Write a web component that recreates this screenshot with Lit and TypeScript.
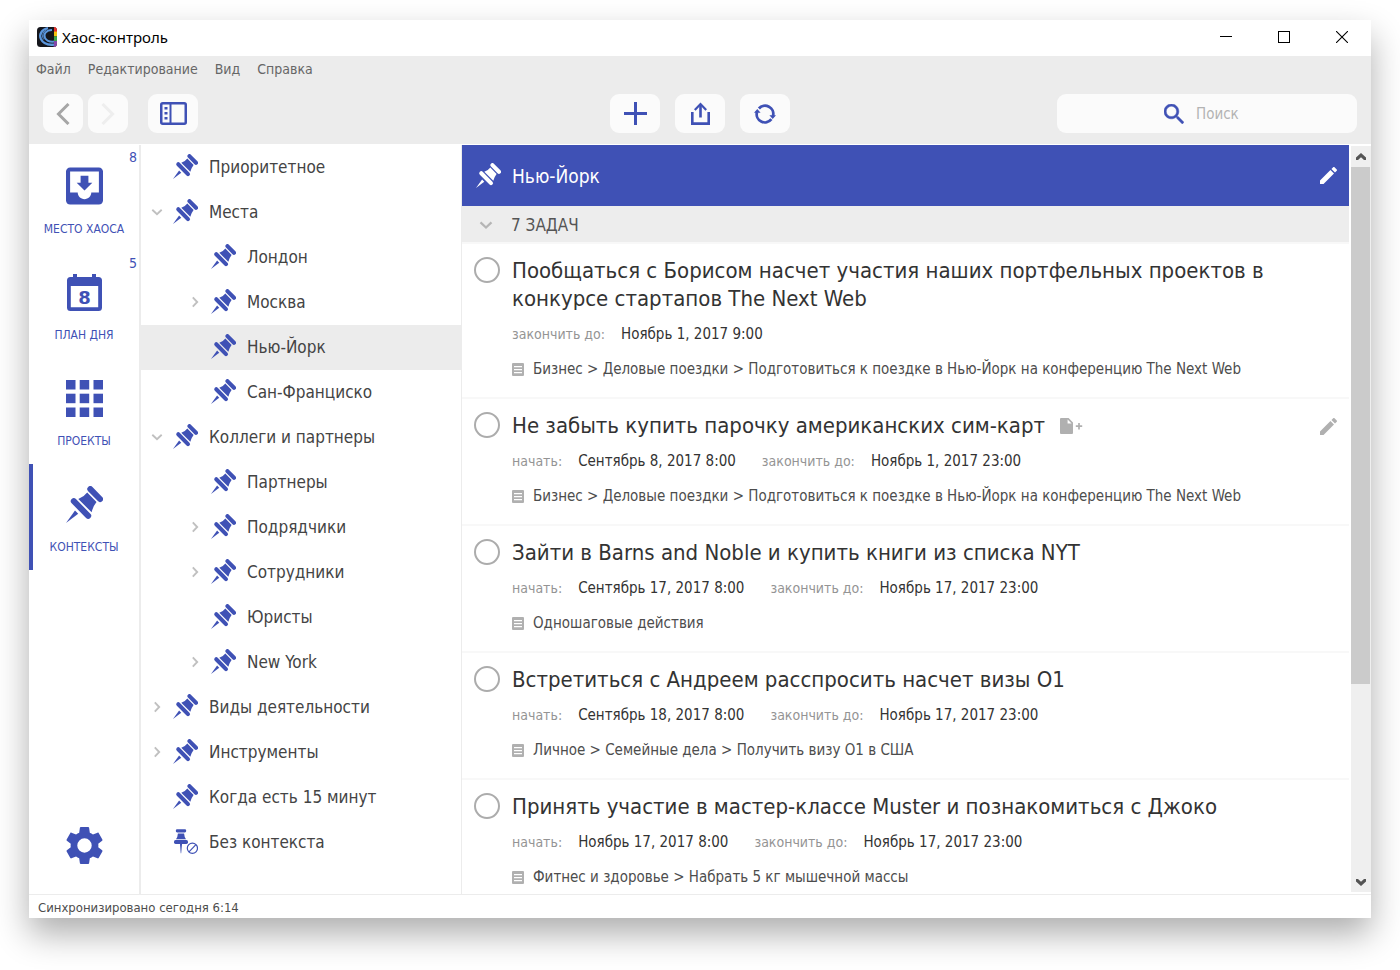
import { LitElement, html, css, svg, nothing, type TemplateResult } from "lit";
import { customElement, property, state } from "lit/decorators.js";
import { classMap } from "lit/directives/class-map.js";

interface ContextNode {
  name: string;
  level: 0 | 1;
  toggle?: "open" | "closed";
  none?: boolean;
}

interface Task {
  title: string;
  start?: string;
  due: string;
  path: string;
  hovered?: boolean;
}

const CONTEXTS: ContextNode[] = [
  { name: "Приоритетное", level: 0 },
  { name: "Места", level: 0, toggle: "open" },
  { name: "Лондон", level: 1 },
  { name: "Москва", level: 1, toggle: "closed" },
  { name: "Нью-Йорк", level: 1 },
  { name: "Сан-Франциско", level: 1 },
  { name: "Коллеги и партнеры", level: 0, toggle: "open" },
  { name: "Партнеры", level: 1 },
  { name: "Подрядчики", level: 1, toggle: "closed" },
  { name: "Сотрудники", level: 1, toggle: "closed" },
  { name: "Юристы", level: 1 },
  { name: "New York", level: 1, toggle: "closed" },
  { name: "Виды деятельности", level: 0, toggle: "closed" },
  { name: "Инструменты", level: 0, toggle: "closed" },
  { name: "Когда есть 15 минут", level: 0 },
  { name: "Без контекста", level: 0, none: true },
];

const CONFERENCE =
  "Бизнес > Деловые поездки > Подготовиться к поездке в Нью-Йорк на конференцию The Next Web";

const TASKS: Task[] = [
  {
    title: "Пообщаться с Борисом насчет участия наших портфельных проектов в конкурсе стартапов The Next Web",
    due: "Ноябрь 1, 2017 9:00",
    path: CONFERENCE,
  },
  {
    title: "Не забыть купить парочку американских сим-карт",
    start: "Сентябрь 8, 2017 8:00",
    due: "Ноябрь 1, 2017 23:00",
    path: CONFERENCE,
    hovered: true,
  },
  {
    title: "Зайти в Barns and Noble и купить книги из списка NYT",
    start: "Сентябрь 17, 2017 8:00",
    due: "Ноябрь 17, 2017 23:00",
    path: "Одношаговые действия",
  },
  {
    title: "Встретиться с Андреем расспросить насчет визы O1",
    start: "Сентябрь 18, 2017 8:00",
    due: "Ноябрь 17, 2017 23:00",
    path: "Личное > Семейные дела > Получить визу O1 в США",
  },
  {
    title: "Принять участие в мастер-классе Muster и познакомиться с Джоко",
    start: "Ноябрь 17, 2017 8:00",
    due: "Ноябрь 17, 2017 23:00",
    path: "Фитнес и здоровье > Набрать 5 кг мышечной массы",
  },
];

const icon = (w: number, h: number, box: string, body: TemplateResult) =>
  html`<svg class="icon" width=${w} height=${h} viewBox=${box} fill="currentColor" aria-hidden="true">${body}</svg>`;

const pin = (size: number) =>
  icon(size, size, "0 0 37 37", svg`
    <path d="M24.3 3.100 L34 13" stroke="currentColor" stroke-width="6" stroke-linecap="round"/>
    <path d="M7.800 15.200 L22.200 29.800" stroke="currentColor" stroke-width="6" stroke-linecap="round"/>
    <path d="M12.300 13 Q18 11 21.200 6.600 L30.500 16.100 Q27 20.500 25.600 26.300 Z"/>
    <path d="M0 37 L9 24.600 L12.200 27.800 Z"/>`);

const pinNone = icon(25, 25, "0 0 25 25", svg`
  <rect x="2.8" y="0.3" width="10.4" height="3.2" rx="1.4"/>
  <path d="M4.9 4.4 H11.1 Q11.3 7.8 13 10.2 H3 Q4.7 7.8 4.9 4.4Z"/>
  <rect x="1" y="11.1" width="14" height="3.8" rx="1.6"/>
  <path d="M7 15 H9 L8.2 24.2 H7.7Z"/>
  <circle cx="19.4" cy="19.2" r="5.1" fill="none" stroke="currentColor" stroke-width="1.2"/>
  <path d="M16 22.8 L22.9 15.7" stroke="currentColor" stroke-width="1.2"/>`);

const chevron = (open: boolean, size = 12) =>
  icon(size, size, "0 0 12 12", open
    ? svg`<path d="M1.300 3.8 L6 8.2 L10.700 3.8" fill="none" stroke="currentColor" stroke-width="1.900"/>`
    : svg`<path d="M3.8 1.300 L8.2 6 L3.8 10.700" fill="none" stroke="currentColor" stroke-width="1.900"/>`);

const pencil = icon(17, 17, "3 3 18 18", svg`
  <path d="M3 17.25V21h3.75L17.81 9.94l-3.75-3.75L3 17.25zM20.71 7.04c.39-.39.39-1.02 0-1.41l-2.34-2.34c-.39-.39-1.02-.39-1.41 0l-1.83 1.83 3.75 3.75 1.83-1.83z"/>`);

const inbox = icon(37, 38, "3 3 18 18", svg`
  <path d="M19 3H5c-1.100 0-2 .9-2 2v14c0 1.100.9 2 2 2h14c1.100 0 2-.9 2-2V5c0-1.100-.9-2-2-2zm0 12.200h-3.700c0 1.800-1.500 3.200-3.300 3.200s-3.300-1.400-3.300-3.200H5V5h14v10.200zm-3.200-4.800h-1.900V7h-3.800v3.400H8.200L12 14.200l3.800-3.800z"/>`);

const calendar = icon(35, 37, "0 0 35 37", svg`
  <path fill-rule="evenodd" d="M6 0h4v3h15V0h4v3h2.500a3.500 3.500 0 0 1 3.500 3.500v27a3.500 3.500 0 0 1-3.500 3.500h-28A3.500 3.500 0 0 1 0 33.500v-27A3.500 3.500 0 0 1 3.500 3H6zM3.800 12v21.300h27.400V12z"/>
  <text class="day" x="17.500" y="29.500" text-anchor="middle">8</text>`);

const grid = icon(37, 37, "0 0 37 37", svg`
  ${[0, 13.7, 27.5].map((y) => [0, 13.7, 27.5].map((x) => svg`<rect x=${x} y=${y} width="9.500" height="9.500"/>`))}`);

const gear = icon(37, 39, "2 1.500 20 21", svg`
  <path d="M19.430 12.980c.04-.32.07-.64.07-.98s-.03-.66-.07-.98l2.110-1.650c.19-.15.24-.42.12-.64l-2-3.460c-.12-.22-.39-.3-.61-.22l-2.490 1c-.52-.4-1.080-.73-1.690-.98l-.38-2.650C14.460 2.180 14.250 2 14 2h-4c-.25 0-.46.18-.49.42l-.38 2.650c-.61.25-1.170.59-1.690.98l-2.490-1c-.23-.09-.49 0-.61.22l-2 3.460c-.13.22-.07.49.12.64l2.110 1.650c-.04.32-.07.65-.07.98s.03.66.07.98l-2.110 1.650c-.19.15-.24.42-.12.64l2 3.460c.12.22.39.3.61.22l2.490-1c.52.4 1.080.73 1.690.98l.38 2.650c.03.24.24.42.49.42h4c.25 0 .46-.18.49-.42l.38-2.650c.61-.25 1.170-.59 1.690-.98l2.490 1c.23.09.49 0 .61-.22l2-3.460c.12-.22.07-.49-.12-.64l-2.110-1.650zM12 15.900a3.900 3.900 0 1 1 0-7.800 3.900 3.900 0 0 1 0 7.800z"/>`);

const appLogo = icon(20, 20, "0 0 20 20", svg`
  <rect width="20" height="20" rx="3.500" fill="#15161c"/>
  <path d="M17 0.100 Q20 0.500 20 3.500 V5 H17Z" fill="#e5322d"/>
  <rect x="17" y="4.600" width="3" height="4.800" fill="#f4c20d"/>
  <rect x="17" y="9.400" width="3" height="4.600" fill="#3aa648"/>
  <path d="M17 14 H20 V16.500 Q20 19.600 16.600 20Z" fill="#8546a8"/>
  <g fill="none" stroke="#5b96dc">
    <path d="M11 1.200 C4.500 2.500 1.800 7.500 3.900 12 C6 16.200 11 18.300 17 17.600" stroke-width="2.300"/>
    <path d="M15 3 C9 3 6 7.500 8 11 C9.800 14 13 15 17 14.600" stroke-width="2"/>
    <path d="M9 2.800 C5.500 5.500 4.600 9.500 6.800 12.500" stroke-width="1"/>
  </g>`);

const doc = icon(12, 13, "0 0 12 13", svg`
  <path fill-rule="evenodd" d="M1 0h10a1 1 0 0 1 1 1v11a1 1 0 0 1-1 1H1a1 1 0 0 1-1-1V1a1 1 0 0 1 1-1zM2 3v1.200h8V3zM2 6v1.200h8V6zM2 9v1.200h8V9z"/>`);

const noteAdd = icon(23, 16, "0 0 23 16", svg`
  <path fill-rule="evenodd" d="M1 0h7.600L13 4.500V15a1 1 0 0 1-1 1H1a1 1 0 0 1-1-1V1a1 1 0 0 1 1-1zM7.600 1.400v4h4z"/>
  <path d="M19 5v6.400M15.800 8.200h6.400" stroke="currentColor" stroke-width="1.700"/>`);

const glyphs = {
  back: icon(14, 22, "0 0 14 22", svg`<path d="M12.500 1 L2.500 11 L12.500 21" fill="none" stroke="currentColor" stroke-width="3"/>`),
  forward: icon(14, 22, "0 0 14 22", svg`<path d="M1.500 1 L11.500 11 L1.500 21" fill="none" stroke="currentColor" stroke-width="3"/>`),
  panel: icon(27, 23, "0 0 27 23", svg`
    <rect x="1.250" y="1.250" width="24.500" height="20.500" rx="1.500" fill="none" stroke="currentColor" stroke-width="2.500"/>
    <path d="M10.500 1v21" stroke="currentColor" stroke-width="2"/>
    <path d="M4.500 5h3v2.500h-3zM4.500 10h3v2.500h-3zM4.500 15h3v2.500h-3z"/>`),
  plus: icon(23, 23, "0 0 23 23", svg`<path d="M10 0h3v10h10v3H13v10h-3V13H0v-3h10z"/>`),
  share: icon(19, 23, "0 0 19 23", svg`
    <path d="M0 10h2.600v10.200h13.800V10H19v13H0z"/>
    <path d="M9.500 2.500V15.500" stroke="currentColor" stroke-width="2.600"/>
    <path d="M3.800 8 L9.500 2 L15.200 8" fill="none" stroke="currentColor" stroke-width="2.200"/>`),
  sync: icon(22, 22, "0 0 22 22", svg`
    <path d="M3 9 A8.200 8.200 0 0 0 17.400 16.200" fill="none" stroke="currentColor" stroke-width="2.800"/>
    <path d="M4.900 5.500 A8.200 8.200 0 0 1 19 13" fill="none" stroke="currentColor" stroke-width="2.800"/>
    <path d="M0 9.800 L3.300 6 L6.600 9.800ZM15.400 12.200 H22 L18.700 16Z"/>`),
  search: icon(20, 20, "3 3 17.500 17.500", svg`
    <path stroke="currentColor" stroke-width=".4" d="M15.500 14h-.79l-.28-.27C15.410 12.590 16 11.110 16 9.500 16 5.910 13.090 3 9.500 3S3 5.910 3 9.500 5.910 16 9.500 16c1.610 0 3.090-.59 4.230-1.570l.27.28v.79l5 4.990L20.490 19l-4.990-5zm-6 0C7.010 14 5 11.990 5 9.500S7.010 5 9.500 5 14 7.010 14 9.500 11.990 14 9.500 14z"/>`),
  minimize: icon(12, 12, "0 0 12 12", svg`<path d="M0 5h12v1H0z"/>`),
  maximize: icon(12, 12, "0 0 12 12", svg`<rect x=".5" y=".5" width="11" height="11" fill="none" stroke="currentColor"/>`),
  close: icon(12, 12, "0 0 12 12", svg`<path d="M0 0 L12 12 M12 0 L0 12" stroke="currentColor" stroke-width="1.100"/>`),
  up: icon(10, 8, "0 0 10 8", svg`<path d="M0 7V4.500L5 0l5 4.500V7H8L5 4.200 2 7z"/>`),
  down: icon(10, 8, "0 0 10 8", svg`<path d="M0 1v2.500L5 8l5-4.500V1H8L5 3.800 2 1z"/>`),
};

const RAIL = [
  { label: "МЕСТО ХАОСА", icon: inbox, count: 8 },
  { label: "ПЛАН ДНЯ", icon: calendar, count: 5 },
  { label: "ПРОЕКТЫ", icon: grid },
  { label: "КОНТЕКСТЫ", icon: pin(37), active: true },
];

const base = css`
  * { box-sizing: border-box; }
  button, input {
    margin: 0;
    padding: 0;
    border: 0;
    background: none;
    color: inherit;
    font: inherit;
  }
  button { display: flex; align-items: center; justify-content: center; }
  a { color: inherit; text-decoration: none; }
  ul { margin: 0; padding: 0; list-style: none; }
  .icon { display: block; flex: none; }
`;

@customElement("task-row")
class TaskRow extends LitElement {
  static styles = [base, css`
    :host { display: block; }
    .task {
      display: grid;
      grid-template-columns: 50px 1fr auto;
      padding: 13px 12px 18px 0;
      border-bottom: 2px solid #f8f8f8;
    }
    .done {
      appearance: none;
      width: 26px;
      height: 26px;
      margin: 0 0 0 12px;
      border: 2px solid #acacac;
      border-radius: 50%;
    }
    .done:checked { background: #acacac; }
    .head { display: flex; align-items: center; gap: 15px; }
    .title { font-size: 22px; line-height: 28px; color: #333; }
    .note, .edit { color: #b0b0b0; }
    .edit { height: 28px; }
    .dates { display: flex; margin-top: 11px; line-height: 20px; }
    .term { margin-right: 16px; font-size: 14px; color: #949494; }
    .date { margin-right: 26px; font-size: 15px; color: #333; }
    .path {
      display: flex;
      align-items: center;
      gap: 9px;
      margin-top: 15px;
      font-size: 15px;
      line-height: 20px;
      color: #4d4d4d;
    }
    .doc { color: #b0b0b0; }
  `];

  @property({ attribute: false }) task!: Task;

  render() {
    const t = this.task;
    return html`<article class="task">
      <input class="done" id="done" type="checkbox" />
      <div>
        <div class="head">
          <label class="title" for="done">${t.title}</label>
          ${t.hovered ? html`<button class="note" aria-label="Добавить заметку">${noteAdd}</button>` : nothing}
        </div>
        <div class="dates">
          ${t.start ? html`<span class="term">начать:</span><time class="date">${t.start}</time>` : nothing}
          <span class="term">закончить до:</span><time class="date">${t.due}</time>
        </div>
        <a class="path" href="#"><span class="doc">${doc}</span>${t.path}</a>
      </div>
      ${t.hovered ? html`<button class="edit" aria-label="Изменить">${pencil}</button>` : nothing}
    </article>`;
  }
}

@customElement("app-root")
class AppRoot extends LitElement {
  static styles = [base, css`
    :host {
      display: block;
      height: 100vh;
      padding: 20px 29px 52px;
      background: #fff;
      font-family: "DejaVu Sans Condensed", "DejaVu Sans", "Noto Sans", sans-serif;
      box-sizing: border-box;
      overflow: hidden;
    }
    .window {
      display: flex;
      flex-direction: column;
      height: 100%;
      background: #fff;
      box-shadow: 0 16px 32px rgba(0, 0, 0, 0.32);
    }
    .titlebar {
      display: flex;
      align-items: center;
      height: 36px;
      padding: 0 0 2px 8px;
      color: #000;
    }
    .app-name {
      flex: 1;
      margin-left: 5px;
      font-family: "Noto Sans", sans-serif;
      font-size: 15px;
      line-height: 20px;
    }
    .win { width: 58px; height: 34px; }
    .chrome { background: #ececec; }
    .menu { display: flex; gap: 17px; padding: 3px 7px 5px; font-size: 14px; line-height: 20px; color: #666; }
    .toolbar {
      display: grid;
      grid-template-columns: 1fr auto 1fr;
      align-items: center;
      padding: 10px 14px 11px;
    }
    .group { display: flex; gap: 15px; }
    .nav { display: flex; gap: 5px; margin-right: 5px; }
    .tool {
      width: 50px;
      height: 39px;
      border-radius: 9px;
      background: #fbfbfb;
      color: #3f51b5;
    }
    .nav .tool { width: 40px; }
    .tool.back { color: #a6a6a6; }
    .tool.forward { color: #eee; }
    .search {
      display: flex;
      align-items: center;
      justify-self: end;
      gap: 12px;
      width: 300px;
      height: 39px;
      padding: 0 12px 0 107px;
      border-radius: 9px;
      background: #fbfbfb;
      color: #3f51b5;
    }
    .query { flex: 1; min-width: 0; font-size: 15px; outline: 0; color: #333; }
    .query::placeholder { color: #b3b3b3; opacity: 1; }
    .body { display: flex; flex: 1; min-height: 0; margin-top: 1px; }
    .rail {
      display: flex;
      flex-direction: column;
      flex: none;
      width: 112px;
      padding-top: 1px;
      border-right: 2px solid #ececec;
      color: #3f51b5;
    }
    .section {
      position: relative;
      display: flex;
      flex-direction: column;
      align-items: center;
      height: 106px;
      padding-top: 20px;
      font-size: 12px;
      line-height: 18px;
    }
    .section.active { box-shadow: inset 4px 0 #3f51b5; }
    .picture { display: flex; align-items: center; height: 40px; }
    .caption { margin-top: 14px; }
    .count { position: absolute; top: 2px; right: 2px; font-size: 14px; }
    .day { font: bold 18px "DejaVu Sans", sans-serif; }
    .settings { margin: auto auto 29px; color: #3f51b5; }
    .tree { flex: none; width: 320px; overflow: hidden; }
    .node {
      display: flex;
      align-items: center;
      height: 45px;
      padding: 0 0 2px 10px;
      font-size: 17px;
      color: #444;
    }
    .node.child { padding-left: 48px; }
    .node.selected { background: #ececec; }
    .toggle { width: 12px; height: 43px; margin-right: 10px; color: #c0c0c0; }
    .pin { margin-right: 11px; color: #3f51b5; }
    .list {
      flex: 1;
      min-width: 0;
      overflow: hidden;
      margin-right: 2px;
      border-left: 1px solid #ececec;
    }
    .heading {
      display: flex;
      align-items: center;
      height: 61px;
      padding: 0 12px 0 14px;
      background: #3f51b5;
      color: #fff;
    }
    .name { flex: 1; margin: 0 0 0 11px; font-size: 19px; font-weight: 400; line-height: 24px; }
    .counter {
      display: flex;
      align-items: center;
      height: 38px;
      padding: 2px 0 0 17px;
      border-bottom: 2px solid #f8f8f8;
      background: #ededed;
      color: #555;
      font-size: 17px;
    }
    .fold { margin-right: 18px; color: #b5b5b5; }
    .scroll {
      display: flex;
      flex-direction: column;
      flex: none;
      width: 20px;
      margin: 1px 0 2px;
      background: #efefef;
      color: #555;
    }
    .step { height: 21px; }
    .track { flex: 1; padding-right: 1px; }
    .thumb { height: 73.5%; background: #cbcbcb; }
    .status {
      padding: 4px 9px 1px;
      border-top: 1px solid #ececec;
      font-size: 13px;
      line-height: 18px;
      color: #4d4d4d;
    }
  `];

  @state() selected = "Нью-Йорк";

  node(n: ContextNode) {
    return html`<li
      class=${classMap({ node: true, child: n.level === 1, selected: n.name === this.selected })}
      @click=${() => (this.selected = n.name)}
    >
      ${n.toggle
        ? html`<button class="toggle" aria-label="Развернуть">${chevron(n.toggle === "open")}</button>`
        : html`<span class="toggle"></span>`}
      <span class="pin">${n.none ? pinNone : pin(25)}</span>
      <span>${n.name}</span>
    </li>`;
  }

  render() {
    return html`<div class="window">
      <header class="titlebar">
        ${appLogo}<span class="app-name">Хаос-контроль</span>
        <button class="win" aria-label="Свернуть">${glyphs.minimize}</button>
        <button class="win" aria-label="Развернуть">${glyphs.maximize}</button>
        <button class="win" aria-label="Закрыть">${glyphs.close}</button>
      </header>
      <div class="chrome">
        <nav class="menu">
          ${["Файл", "Редактирование", "Вид", "Справка"].map((m) => html`<button>${m}</button>`)}
        </nav>
        <div class="toolbar">
          <div class="group">
            <div class="nav">
              <button class="tool back" aria-label="Назад">${glyphs.back}</button>
              <button class="tool forward" aria-label="Вперед">${glyphs.forward}</button>
            </div>
            <button class="tool" aria-label="Боковая панель">${glyphs.panel}</button>
          </div>
          <div class="group">
            <button class="tool" aria-label="Добавить">${glyphs.plus}</button>
            <button class="tool" aria-label="Поделиться">${glyphs.share}</button>
            <button class="tool" aria-label="Синхронизировать">${glyphs.sync}</button>
          </div>
          <label class="search">${glyphs.search}<input class="query" type="text" placeholder="Поиск" aria-label="Поиск" /></label>
        </div>
      </div>
      <div class="body">
        <nav class="rail">
          ${RAIL.map((r) => html`<a class=${classMap({ section: true, active: !!r.active })} href="#">
            <span class="picture">${r.icon}</span>
            <span class="caption">${r.label}</span>
            ${r.count ? html`<span class="count">${r.count}</span>` : nothing}
          </a>`)}
          <button class="settings" aria-label="Настройки">${gear}</button>
        </nav>
        <ul class="tree">${CONTEXTS.map((n) => this.node(n))}</ul>
        <main class="list">
          <header class="heading">
            ${pin(25)}
            <h1 class="name">${this.selected}</h1>
            <button aria-label="Изменить">${pencil}</button>
          </header>
          <div class="counter"><button class="fold" aria-label="Свернуть">${chevron(true, 14)}</button>7 ЗАДАЧ</div>
          ${TASKS.map((t) => html`<task-row .task=${t}></task-row>`)}
        </main>
        <div class="scroll">
          <button class="step" aria-label="Вверх">${glyphs.up}</button>
          <div class="track"><div class="thumb"></div></div>
          <button class="step" aria-label="Вниз">${glyphs.down}</button>
        </div>
      </div>
      <footer class="status">Синхронизировано сегодня 6:14</footer>
    </div>`;
  }
}
